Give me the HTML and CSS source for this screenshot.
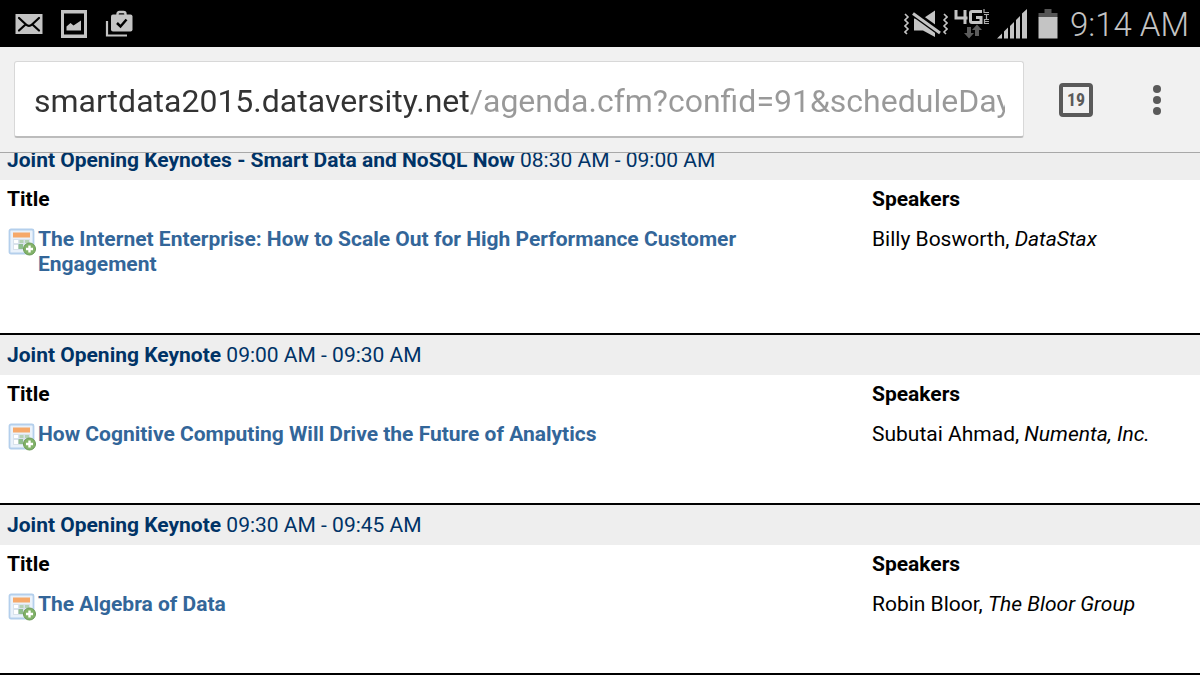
FILE: index.html
```html
<!DOCTYPE html>
<html lang="en">
<head>
    <meta charset="UTF-8">
    <meta name="viewport" content="width=device-width, initial-scale=1.0">
    <title>Smart Data 2015 Agenda</title>
    <link rel="stylesheet" href="styles.css">
</head>
<body>
    <!-- calendar icon shared by all talks -->
    <svg class="sprite" width="0" height="0" aria-hidden="true">
        <symbol id="calendar-add" viewBox="0 0 28 28">
            <rect x="1.5" y="1.5" width="24" height="24" rx="1.5" fill="#eaf2fb" stroke="#b4cfec" stroke-width="1.8"/>
            <rect x="5" y="4.500" width="17" height="5" fill="#f6a96a"/>
            <path d="M5 11h17v11h-17z" fill="#d9e2ec"/>
            <path d="M6 12h4v3h-4zM6 17h4v4h-4z" fill="#fff"/>
            <path d="M11.500 12h4v3h-4zM17 12h4v3h-4z" fill="#b5d2b5"/>
            <path d="M10.500 16h4.500v5h-4.500z" fill="#8fbd8f"/>
            <circle cx="21.500" cy="21" r="6" fill="#83b36a" stroke="#6a9a54"/>
            <path d="M21.500 17.500v7M18 21h7" stroke="#fff" stroke-width="2.400"/>
        </symbol>
    </svg>

    <header class="top">
        <div class="status-bar">
            <div class="notifications">
                <svg width="28" height="22" viewBox="0 0 28 22">
                    <path d="M0.500 1h27v20h-27z" fill="#c4c4c4"/>
                    <path d="M4 5l7 6.500q3 3 6 0L24 5M4 17.500l6-5.500M24 17.500L18 12" fill="none" stroke="#000" stroke-width="2.200" stroke-linecap="round"/>
                </svg>
                <svg width="28" height="28" viewBox="0 0 28 28">
                    <path d="M1 0h26v28H1zM4 3.500v21h20v-21z" fill="#c4c4c4" fill-rule="evenodd"/>
                    <path d="M6.500 20.500v-4l4-3.500 3 2.500 7.500-5v10z" fill="#c4c4c4"/>
                </svg>
                <svg width="28" height="28" viewBox="0 0 28 28">
                    <path d="M2 11v14.500H22" fill="none" stroke="#c4c4c4" stroke-width="2.200"/>
                    <path d="M12.500 6V4q0-2 2-2h4q2 0 2 2v2" fill="none" stroke="#c4c4c4" stroke-width="2.400"/>
                    <rect x="6" y="4.500" width="21.500" height="17" rx="2" fill="#c4c4c4"/>
                    <path d="M12 13l3.500 3.500 6-7" fill="none" stroke="#000" stroke-width="2.500"/>
                </svg>
            </div>
            <div class="indicators">
                <svg width="44" height="30" viewBox="0 0 44 30">
                    <path d="M1 5l3 3-3 3 3 3-3 3 3 3-3 3 2 2M40 5l3 3-3 3 3 3-3 3 3 3-3 3 2 2" fill="none" stroke="#c4c4c4" stroke-width="1.600"/>
                    <path d="M10 9.500h9L31 1.500V28L19 21.500h-9z" fill="#c4c4c4"/>
                    <path d="M8 3L37 24" stroke="#000" stroke-width="7"/>
                    <path d="M9 4.500L36 24" stroke="#c4c4c4" stroke-width="3"/>
                </svg>
                <svg width="36" height="30" viewBox="0 0 36 30">
                    <path d="M2 1v8h11.500M11 1v14M28 2.500H18q-1.500 0-1.500 1.500v8q0 1.500 1.500 1.500h9V8.500h-5" fill="none" stroke="#c4c4c4" stroke-width="3"/>
                    <path d="M30 0v3.500h5M30 5.500h5M32.500 6v4M35 10.500h-4.500v4H35M31 12.500h4" fill="none" stroke="#aaa" stroke-width="1.200"/>
                    <path d="M13 18h4v6h3l-5 5.500-5-5.500h3zM21 27v-6h-3l5-5.500 5 5.500h-3v6z" fill="#5c5c5c"/>
                </svg>
                <svg width="32" height="30" viewBox="0 0 32 30">
                    <path d="M1 29.500l5-5v5zM8 29.500v-7l4-4v11zM14 29.500V17l4-4v16.500zM20 29.500V11l4-4v22.500zM26 29.500V4.500L31 0v29.500z" fill="#c4c4c4"/>
                </svg>
                <svg class="battery" width="20" height="30" viewBox="0 0 20 30">
                    <path d="M0.500 4h6V0h7v4h6v4.500h-19z" fill="#555"/>
                    <path d="M0.500 8h19v21.500h-19z" fill="#c4c4c4"/>
                </svg>
                <time class="clock">9:14 AM</time>
            </div>
        </div>
        <div class="toolbar">
            <div class="omnibox">
                <input type="text" class="url" aria-label="Address" value="smartdata2015.dataversity.net/agenda.cfm?confid=91&amp;scheduleDay=08/18/2015">
            </div>
            <button class="tabs" aria-label="Open tabs">19</button>
            <button class="menu" aria-label="Menu">
                <svg width="10" height="32" viewBox="0 0 10 32" fill="#5a5a5a">
                    <circle cx="5" cy="5" r="4"/>
                    <circle cx="5" cy="16" r="4"/>
                    <circle cx="5" cy="27" r="4"/>
                </svg>
            </button>
        </div>
    </header>

    <main class="agenda">
        <section class="session">
            <h2><b>Joint Opening Keynotes - Smart Data and NoSQL Now</b> 08:30 AM - 09:00 AM</h2>
            <table>
                <tr><th class="col-title">Title</th><th>Speakers</th></tr>
                <tr>
                    <td><div class="talk"><svg class="cal"><use href="#calendar-add"/></svg><a href="#">The Internet Enterprise: How to Scale Out for High Performance Customer Engagement</a></div></td>
                    <td>Billy Bosworth, <i>DataStax</i></td>
                </tr>
            </table>
        </section>
        <section class="session">
            <h2><b>Joint Opening Keynote</b> 09:00 AM - 09:30 AM</h2>
            <table>
                <tr><th class="col-title">Title</th><th>Speakers</th></tr>
                <tr>
                    <td><div class="talk"><svg class="cal"><use href="#calendar-add"/></svg><a href="#">How Cognitive Computing Will Drive the Future of Analytics</a></div></td>
                    <td>Subutai Ahmad, <i>Numenta, Inc.</i></td>
                </tr>
            </table>
        </section>
        <section class="session">
            <h2><b>Joint Opening Keynote</b> 09:30 AM - 09:45 AM</h2>
            <table>
                <tr><th class="col-title">Title</th><th>Speakers</th></tr>
                <tr>
                    <td><div class="talk"><svg class="cal"><use href="#calendar-add"/></svg><a href="#">The Algebra of Data</a></div></td>
                    <td>Robin Bloor, <i>The Bloor Group</i></td>
                </tr>
            </table>
        </section>
    </main>
</body>
</html>
```
FILE: styles.css
```css
* {
    box-sizing: border-box;
}
body {
    margin: 0;
    height: 100vh;
    overflow: hidden;
    background-color: #ffffff;
    color: #000000;
    font-family: Roboto, Arial, sans-serif;
    font-size: 21px;
    line-height: 25px;
}
.sprite {
    display: block;
}
.top {
    position: sticky;
    top: 0;
    z-index: 1;
}

/* Android status bar */
.status-bar {
    display: flex;
    justify-content: space-between;
    align-items: center;
    height: 47px;
    padding: 0 11px 0 15px;
    background-color: #000000;
}
.notifications {
    display: flex;
    align-items: center;
    gap: 17px;
}
.indicators {
    display: flex;
    align-items: center;
    gap: 6px;
}
.battery {
    margin-left: 4px;
}
.clock {
    margin-left: 6px;
    padding-top: 2px;
    color: #c4c4c4;
    font-size: 33px;
    font-weight: 300;
    line-height: 45px;
}

/* Browser toolbar */
.toolbar {
    display: flex;
    align-items: center;
    height: 106px;
    padding: 0 38px 0 14px;
    background-color: #f1f1f1;
    border-bottom: 1px solid #a8a8a8;
}
.omnibox {
    flex: 1;
    padding: 0 18px 0 19px;
    background-color: #ffffff;
    border: 1px solid #d8d8d8;
    border-bottom: 2px solid #bcbcbc;
    border-radius: 3px;
}
.url {
    display: block;
    width: 100%;
    height: 74px;
    padding: 3px 0 0;
    border: none;
    outline: none;
    font-family: inherit;
    font-size: 32px;
    color: transparent;
    /* host name dark, path grey */
    background: linear-gradient(to right, #333333 436px, #999999 436px);
    -webkit-background-clip: text;
    background-clip: text;
}
.tabs {
    width: 34px;
    height: 34px;
    margin: 0 59px 0 35px;
    padding: 0;
    background: none;
    border: 4px solid #5a5a5a;
    border-radius: 4px;
    color: #5a5a5a;
    font-family: "Roboto Condensed", Roboto, sans-serif;
    font-size: 18px;
    font-weight: bold;
    line-height: 26px;
}
.menu {
    display: flex;
    padding: 0;
    background: none;
    border: none;
}

/* Agenda, scrolled slightly under the toolbar */
.agenda {
    margin-top: -13px;
}
.session {
    border-bottom: 2px solid #000000;
}
h2 {
    margin: 0;
    padding: 8px 7px 7px;
    background-color: #eeeeee;
    color: #003366;
    font-size: 21px;
    font-weight: normal;
}
table {
    width: 100%;
    border-collapse: collapse;
    table-layout: fixed;
}
th {
    padding: 7px 8px;
    text-align: left;
}
.col-title {
    width: 72%;
    padding-left: 7px;
}
td {
    padding: 8px 8px 56px;
    vertical-align: top;
}
.talk {
    display: flex;
    align-items: flex-start;
    padding-right: 64px;
}
.cal {
    flex: none;
    width: 28px;
    height: 28px;
    margin: 1px 2px -4px 0;
}
a {
    color: #336699;
    font-weight: bold;
    text-decoration: none;
}
```
